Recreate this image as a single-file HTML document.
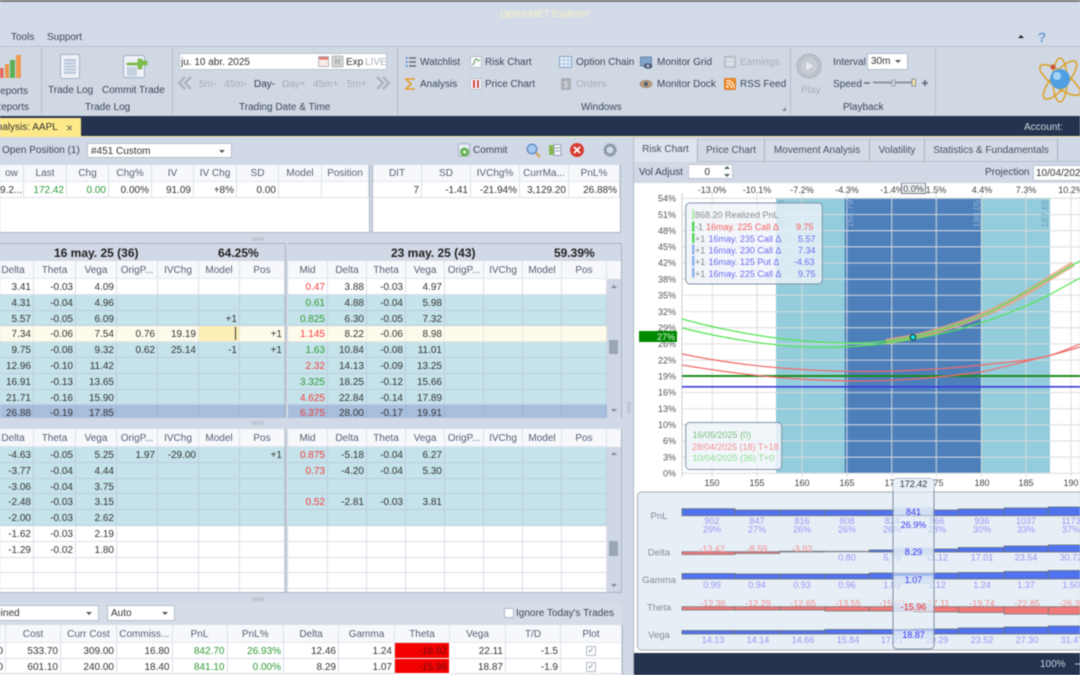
<!DOCTYPE html>
<html><head><meta charset="utf-8"><title>OptionNET Explorer</title>
<style>
html,body{margin:0;padding:0;background:#d2d9e6}
#p{position:absolute;left:0;top:0;width:1080px;height:675px;overflow:hidden;background:#d2d9e6;font:10px/12px "Liberation Sans",sans-serif;color:#3c4757;filter:blur(.4px)}
.a{position:absolute}
.t{position:absolute;white-space:nowrap;line-height:12px;margin-top:1.5px}
.g{color:#a6aeba}
.s{position:absolute;width:1px;background:#b4bfcd}
.cb{position:absolute;background:#fff;border:1px solid #b3bdcb;box-sizing:border-box;color:#333;line-height:16px;padding-left:3px;white-space:nowrap}
.cb:after{content:"";position:absolute;right:6px;top:6px;border:3px solid transparent;border-top:3px solid #555;border-bottom:0}
.grid{position:absolute;background:#fff;overflow:hidden}
.r{display:grid;grid-template-columns:var(--c);height:var(--h);box-sizing:border-box}
.r i{font-style:normal;text-align:right;padding-right:2px;line-height:calc(var(--h) + 2px);border-right:1px solid #dde1ea;border-bottom:1px solid #dde1ea;overflow:hidden;white-space:nowrap;color:#333;min-width:0}
.h i{background:#f6f8fb;text-align:center;color:#566072;padding:0;line-height:calc(var(--h) + 1px);border-right:1px solid #dce2ea;border-bottom:1px solid #e4e8ef}
.tl i{background:#c5e3ea;border-color:#bdcfdd}
.cr i{background:#fffbec;border-color:#ebe8de}
.bl i{background:#a7bedc;border-color:#9db2d0}
.r i.gr{color:#2f9a36}.r i.rd{color:#f23c3c}
.r i.y{background:#fdefb6;position:relative}
.r i.y:after{content:"";position:absolute;right:3px;top:1px;width:1px;height:13px;background:#333}
.r i.tr{background:#f40000;color:#701010;border-color:#fff}
.ck{display:inline-block;width:8px;height:8px;border:1px solid #b5bcc6;color:#778;font-size:8px;line-height:8px;text-align:center;background:#fbfcfd;vertical-align:middle}
.sb{position:absolute;background:#d0d7e4}
.th{position:absolute;background:#9aa5b6}
.b{position:absolute;white-space:nowrap;font-weight:bold;color:#222;font-size:12px;line-height:12px}
.tab{position:absolute;top:139px;height:22px;box-sizing:border-box;line-height:22px;text-align:center;border-right:1px solid #a9b2bf;border-top:1px solid #c2cad6;color:#465162;background:#d4dbe7}
.dots{position:absolute;width:11px;height:4px;background:repeating-linear-gradient(90deg,#aeb7c5 0 1px,transparent 1px 2px)}
svg text{font-family:"Liberation Sans",sans-serif}
</style></head><body><div id="p">

<!-- top strip & ribbon -->
<div class="a" style="left:0;top:0;width:1080px;height:2px;background:#7d7a78"></div>
<div class="a" style="left:0;top:2px;width:1080px;height:114px;background:#d4dbe8"></div>
<div class="t" style="left:500px;top:7px;color:#f6f1c4">OptionNET Explorer</div>
<div class="t" style="left:11px;top:30px;color:#3c4757">Tools</div>
<div class="t" style="left:47px;top:30px;color:#3c4757">Support</div>
<div class="a" style="left:0;top:46px;width:1080px;height:1px;background:#b8c2cf"></div>
<div class="a" style="left:0;top:47px;width:1080px;height:68px;background:#d0d8e4"></div>
<div class="s" style="left:41px;top:47px;height:68px"></div>
<div class="s" style="left:172px;top:47px;height:68px"></div>
<div class="s" style="left:397px;top:47px;height:68px"></div>
<div class="s" style="left:790px;top:47px;height:68px"></div>
<div class="s" style="left:935px;top:47px;height:68px"></div>

<svg class="a" style="left:0;top:0" width="1080" height="116" viewBox="0 0 1080 116">
 <!-- reports -->
 <rect x="0" y="68" width="3.5" height="10" fill="#e8665a"/><rect x="5" y="64" width="4" height="14" fill="#e89848"/><rect x="10" y="60" width="5" height="18" fill="#5eaf58"/><rect x="16" y="55" width="5" height="23" fill="#ee9a50"/>
 <!-- trade log -->
 <rect x="60.5" y="54.5" width="19" height="24" rx="1.5" fill="#eef2f8" stroke="#a5b1c6"/><rect x="64" y="59" width="12" height="15" fill="#bcc8dc"/><path d="M64 62h12M64 65h12M64 68h12M64 71h12" stroke="#e8edf4"/>
 <!-- commit trade -->
 <rect x="123.5" y="55.5" width="21" height="22" rx="1.5" fill="#eef2f8" stroke="#a5b1c6"/><rect x="127" y="63" width="10" height="1.6" fill="#7f9ac0"/><rect x="127" y="67" width="10" height="9" fill="#c6d0e0"/>
 <path d="M138 59v4h-11v2h11v4h4v-4h5v-4h-5v-2z" fill="#7fc04a" stroke="#5f9a30" stroke-width=".5"/>
 <!-- watchlist -->
 <path d="M409 58h7M409 62h7M409 66h7" stroke="#556" stroke-width="1.2"/><path d="M406 58h1.5M406 62h1.5M406 66h1.5" stroke="#4a86c8" stroke-width="2"/>
 <!-- analysis sigma -->
 <path d="M415 79h-9l5 5-5 5h9" fill="none" stroke="#e8a13c" stroke-width="1.8"/>
 <!-- risk chart -->
 <rect x="470.5" y="56.5" width="11" height="11" fill="#f6f8fb" stroke="#b7c0cc"/><path d="M472 65c3 0 2-6 4-6s1 3 4 1" fill="none" stroke="#5a9a50"/>
 <!-- price chart -->
 <rect x="470.5" y="78.5" width="11" height="11" fill="#f6f8fb" stroke="#b7c0cc"/><path d="M474 80v8" stroke="#d84040" stroke-width="2"/><path d="M478 80v8" stroke="#c05050" stroke-width="2"/>
 <!-- option chain -->
 <rect x="559.5" y="56.5" width="12" height="11" fill="#e4eefa" stroke="#88a4c8"/><path d="M560 60h11M560 64h11M564 57v10M568 57v10" stroke="#a4bcdc" stroke-width=".7"/>
 <!-- orders -->
 <rect x="561" y="78" width="10" height="12" rx="1" fill="#aab0b6"/><text x="566" y="87.5" font-size="8" text-anchor="middle" fill="#e4e8ec">$</text>
 <!-- monitor grid -->
 <rect x="640.5" y="57" width="11" height="9" fill="#7fa4cc" stroke="#6c88ac"/><ellipse cx="648" cy="66" rx="4.5" ry="2.8" fill="#50607a"/><circle cx="648" cy="66" r="1.2" fill="#dde"/>
 <!-- monitor dock -->
 <ellipse cx="646" cy="84" rx="6" ry="3.6" fill="#c0a080" stroke="#88705c" stroke-width=".6"/><circle cx="646" cy="84" r="2.2" fill="#50607a"/>
 <!-- earnings -->
 <rect x="724.5" y="56.5" width="11" height="11" fill="#c8ced6" stroke="#aeb5bd"/><rect x="726.5" y="59" width="7" height="1.5" fill="#e6e9ed"/><rect x="726.5" y="62" width="7" height="3.5" fill="#dde1e6"/>
 <!-- rss -->
 <rect x="724.5" y="78.5" width="11" height="11" rx="1" fill="#f09030" stroke="#d87a20"/><circle cx="727.5" cy="86.5" r="1.1" fill="#fff"/><path d="M726.5 83c3 0 5 2 5 5M726.5 80.5c4.5 0 7.5 3 7.5 7.5" fill="none" stroke="#fff" stroke-width="1"/>
 <!-- date controls -->
 <rect x="179.5" y="53.5" width="207" height="16" fill="#fff" stroke="#bcc5d2"/>
 <rect x="318.5" y="56.5" width="10" height="10" fill="#fbe8e4" stroke="#b0b8c8"/><rect x="319" y="57" width="9" height="2.6" fill="#e27a70"/>
 <rect x="332" y="56" width="11" height="11" rx="1" fill="#d2d4d4" stroke="#b8bcbc"/><path d="M336 59v5M339 59v5" stroke="#88908c"/>
 <!-- arrows -->
 <path d="M185 77l-6 6 6 6M191 77l-6 6 6 6" fill="none" stroke="#aeb5be" stroke-width="2.4"/>
 <path d="M377 77l6 6-6 6M383 77l6 6-6 6" fill="none" stroke="#aeb5be" stroke-width="2.4"/>
 <!-- launcher -->
 <path d="M786 107v4h-4z" fill="#7d8696"/>
 <!-- play -->
 <circle cx="809" cy="66" r="12" fill="#bcc2ca" stroke="#aeb4bc"/><circle cx="809" cy="66" r="8" fill="#c8cdd4"/><path d="M805.5 60.5l9 5.5-9 5.5z" fill="#e6e9ee" stroke="#a8aeb6" stroke-width=".5"/>
 <!-- slider -->
 <path d="M864 83h6" stroke="#5f6a7a" stroke-width="1.4"/><path d="M873 82.5h39" stroke="#8b95a3" stroke-width="2"/><rect x="892" y="80" width="3" height="6" fill="#d8dde4" stroke="#7f8896" stroke-width=".6"/><rect x="912" y="79" width="3.6" height="7" fill="#f6e8a8" stroke="#6a7280" stroke-width=".7"/><path d="M922 83h6M925 80v6" stroke="#5f6a7a" stroke-width="1.6"/>
 <!-- collapse / help -->
 <path d="M1018 38l3-3 3 3z" fill="#222"/>
 <text x="1042" y="42" font-size="14" font-weight="bold" fill="#6a9cd0" text-anchor="middle" font-family="Liberation Sans">?</text>
 <!-- atom -->
 <g fill="none" stroke="#dca42c" stroke-width="1.6"><ellipse cx="1060" cy="80" rx="24" ry="8" transform="rotate(35 1060 80)"/><ellipse cx="1060" cy="80" rx="24" ry="8" transform="rotate(-50 1060 80)"/><ellipse cx="1060" cy="80" rx="22" ry="7" transform="rotate(90 1060 80)"/></g>
 <circle cx="1060" cy="79" r="10" fill="#4f9fe2"/><circle cx="1057" cy="76" r="4" fill="#a2d4f6"/><circle cx="1053" cy="67" r="2.6" fill="#c85a3a"/>
</svg>

<div class="t" style="left:-7px;top:84px">Reports</div><div class="t" style="left:-6px;top:100px">Reports</div>
<div class="t" style="left:48px;top:83px">Trade Log</div>
<div class="t" style="left:102px;top:83px">Commit Trade</div>
<div class="t" style="left:85px;top:100px">Trade Log</div>
<div class="t" style="left:181px;top:55px;color:#333">ju. 10 abr. 2025</div>
<div class="t" style="left:346px;top:55px;color:#333">Exp</div>
<div class="t g" style="left:365px;top:55px">LIVE</div>
<div class="t g" style="left:199px;top:77px">5m-</div>
<div class="t g" style="left:224px;top:77px">45m-</div>
<div class="t" style="left:254px;top:77px;color:#2f3a4e">Day-</div>
<div class="t g" style="left:282px;top:77px">Day+</div>
<div class="t g" style="left:313px;top:77px">45m+</div>
<div class="t g" style="left:347px;top:77px">5m+</div>
<div class="t" style="left:239px;top:100px">Trading Date &amp; Time</div>
<div class="t" style="left:420px;top:55px">Watchlist</div>
<div class="t" style="left:420px;top:77px">Analysis</div>
<div class="t" style="left:485px;top:55px">Risk Chart</div>
<div class="t" style="left:485px;top:77px">Price Chart</div>
<div class="t" style="left:576px;top:55px">Option Chain</div>
<div class="t g" style="left:576px;top:77px">Orders</div>
<div class="t" style="left:657px;top:55px">Monitor Grid</div>
<div class="t" style="left:657px;top:77px">Monitor Dock</div>
<div class="t g" style="left:740px;top:55px">Earnings</div>
<div class="t" style="left:740px;top:77px">RSS Feed</div>
<div class="t" style="left:581px;top:100px">Windows</div>
<div class="t g" style="left:801px;top:83px">Play</div>
<div class="t" style="left:833px;top:55px">Interval</div>
<div class="cb" style="left:867px;top:53px;width:41px;height:17px">30m</div>
<div class="t" style="left:833px;top:77px">Speed</div>
<div class="t" style="left:843px;top:100px">Playback</div>

<!-- dark bar -->
<div class="a" style="left:0;top:116px;width:1080px;height:20px;background:#26334f"></div>
<div class="a" style="left:0;top:118px;width:81px;height:19px;background:#fde98a"></div>
<div class="t" style="left:-10px;top:120px;color:#333">Analysis: AAPL</div>
<div class="t" style="left:66px;top:120px;color:#555;font-size:12px">×</div>
<div class="t" style="left:1024px;top:120px;color:#cfd6e2">Account:</div>
<div class="a" style="left:81px;top:136px;width:999px;height:1px;background:#efe6a0"></div>

<!-- position bar -->
<div class="t" style="left:2px;top:143px">Open Position (1)</div>
<div class="cb" style="left:87px;top:143px;width:145px;height:15px;line-height:15px">#451 Custom</div>
<svg class="a" style="left:455px;top:142px" width="170" height="18" viewBox="455 142 170 18">
 <rect x="458.5" y="144" width="11" height="12" fill="#eef2f8" stroke="#9eacc4"/><circle cx="464.5" cy="152" r="4.5" fill="#62b050"/><path d="M462.5 152h4M464.5 150v4" stroke="#fff"/>
 <circle cx="532" cy="149" r="4.8" fill="#a4c8ec" stroke="#5c8cc4" stroke-width="1.3"/><path d="M536 153l4 4" stroke="#d8a050" stroke-width="2.2"/>
 <rect x="549" y="145" width="5" height="10" fill="#88b84c"/><rect x="554" y="144.5" width="7" height="11" fill="#f2f5f9" stroke="#93a2b8"/><path d="M555 148h5M555 151h5" stroke="#93a2b8"/>
 <circle cx="577" cy="150" r="7" fill="#d83c30"/><path d="M574 147l6 6M580 147l-6 6" stroke="#fff" stroke-width="1.8"/>
 <circle cx="610" cy="150" r="4.6" fill="none" stroke="#8a96a8" stroke-width="2.2"/><circle cx="610" cy="150" r="6.2" fill="none" stroke="#8a96a8" stroke-width="1.4" stroke-dasharray="1.8 1.4"/>
</svg>
<div class="t" style="left:473px;top:143px">Commit</div>

<!-- upper grids -->
<div class="grid" style="left:0;top:165px;width:369px;height:67px;--c:24px 43px 42px 43px 42px 43px 42px 43px 47px;--h:17px">
 <div class="r h"><i>ow</i><i>Last</i><i>Chg</i><i>Chg%</i><i>IV</i><i>IV Chg</i><i>SD</i><i>Model</i><i>Position</i></div>
 <div class="r" style="--h:16px"><i>9.2...</i><i class="gr">172.42</i><i class="gr">0.00</i><i>0.00%</i><i>91.09</i><i>+8%</i><i>0.00</i><i></i><i></i></div>
</div>
<div class="grid" style="left:373px;top:165px;width:247px;height:67px;--c:49px 49px 49px 49px 51px;--h:17px">
 <div class="r h"><i>DIT</i><i>SD</i><i>IVChg%</i><i>CurrMa...</i><i>PnL%</i></div>
 <div class="r" style="--h:16px"><i>7</i><i>-1.41</i><i>-21.94%</i><i>3,129.20</i><i>26.88%</i></div>
</div>
<div class="a" style="left:0;top:232px;width:370px;height:1px;background:#a9b4c4"></div>
<div class="a" style="left:369px;top:165px;width:1px;height:68px;background:#a9b4c4"></div>
<div class="a" style="left:372px;top:165px;width:1px;height:68px;background:#a9b4c4"></div>
<div class="a" style="left:373px;top:232px;width:248px;height:1px;background:#a9b4c4"></div>
<div class="a" style="left:620px;top:165px;width:1px;height:68px;background:#a9b4c4"></div>
<div class="dots" style="left:252px;top:237px"></div>

<!-- mid grids -->
<div class="a" style="left:0;top:243px;width:285px;height:1px;background:#a9b4c4"></div>
<div class="a" style="left:288px;top:243px;width:334px;height:1px;background:#a9b4c4"></div>
<div class="b" style="left:54px;top:247px">16 may. 25 (36)</div>
<div class="b" style="left:218px;top:247px">64.25%</div>
<div class="b" style="left:391px;top:247px">23 may. 25 (43)</div>
<div class="b" style="left:554px;top:247px">59.39%</div>

<div class="grid" style="left:-7px;top:261px;width:292px;height:157px;--c:41px 42px 41px 41px 41px 41px 45px;--h:15.8px">
 <div class="r h" style="--h:18px"><i>Delta</i><i>Theta</i><i>Vega</i><i>OrigP...</i><i>IVChg</i><i>Model</i><i>Pos</i></div>
 <div class="r"><i>3.41</i><i>-0.03</i><i>4.09</i><i></i><i></i><i></i><i></i></div>
 <div class="r tl"><i>4.31</i><i>-0.04</i><i>4.96</i><i></i><i></i><i></i><i></i></div>
 <div class="r tl"><i>5.57</i><i>-0.05</i><i>6.09</i><i></i><i></i><i>+1</i><i></i></div>
 <div class="r cr"><i>7.34</i><i>-0.06</i><i>7.54</i><i>0.76</i><i>19.19</i><i class="y"></i><i>+1</i></div>
 <div class="r tl"><i>9.75</i><i>-0.08</i><i>9.32</i><i>0.62</i><i>25.14</i><i>-1</i><i>+1</i></div>
 <div class="r tl"><i>12.96</i><i>-0.10</i><i>11.42</i><i></i><i></i><i></i><i></i></div>
 <div class="r tl"><i>16.91</i><i>-0.13</i><i>13.65</i><i></i><i></i><i></i><i></i></div>
 <div class="r tl"><i>21.71</i><i>-0.16</i><i>15.90</i><i></i><i></i><i></i><i></i></div>
 <div class="r bl"><i>26.88</i><i>-0.19</i><i>17.85</i><i></i><i></i><i></i><i></i></div>
</div>
<div class="a" style="left:285px;top:243px;width:1px;height:175px;background:#a9b4c4"></div>
<div class="grid" style="left:288px;top:261px;width:319px;height:157px;--c:40px 39px 39px 39px 39px 39px 39px 45px;--h:15.8px">
 <div class="r h" style="--h:18px"><i>Mid</i><i>Delta</i><i>Theta</i><i>Vega</i><i>OrigP...</i><i>IVChg</i><i>Model</i><i>Pos</i></div>
 <div class="r"><i class="rd">0.47</i><i>3.88</i><i>-0.03</i><i>4.97</i><i></i><i></i><i></i><i></i></div>
 <div class="r tl"><i class="gr">0.61</i><i>4.88</i><i>-0.04</i><i>5.98</i><i></i><i></i><i></i><i></i></div>
 <div class="r tl"><i class="gr">0.825</i><i>6.30</i><i>-0.05</i><i>7.32</i><i></i><i></i><i></i><i></i></div>
 <div class="r cr"><i class="rd">1.145</i><i>8.22</i><i>-0.06</i><i>8.98</i><i></i><i></i><i></i><i></i></div>
 <div class="r tl"><i class="gr">1.63</i><i>10.84</i><i>-0.08</i><i>11.01</i><i></i><i></i><i></i><i></i></div>
 <div class="r tl"><i class="rd">2.32</i><i>14.13</i><i>-0.09</i><i>13.25</i><i></i><i></i><i></i><i></i></div>
 <div class="r tl"><i class="gr">3.325</i><i>18.25</i><i>-0.12</i><i>15.66</i><i></i><i></i><i></i><i></i></div>
 <div class="r tl"><i class="rd">4.625</i><i>22.84</i><i>-0.14</i><i>17.89</i><i></i><i></i><i></i><i></i></div>
 <div class="r bl"><i class="rd">6.375</i><i>28.00</i><i>-0.17</i><i>19.91</i><i></i><i></i><i></i><i></i></div>
</div>
<div class="a" style="left:607px;top:261px;width:14px;height:18px;background:#f6f8fb"></div>
<div class="sb" style="left:607px;top:279px;width:14px;height:139px"></div>
<div class="th" style="left:609px;top:340px;width:9px;height:14px"></div>
<svg class="a" style="left:607px;top:279px" width="14" height="139"><path d="M4 9l3-3 3 3z" fill="#7d8899"/><path d="M4 130l3 3 3-3z" fill="#7d8899"/></svg>
<div class="a" style="left:621px;top:243px;width:1px;height:175px;background:#a9b4c4"></div>
<div class="dots" style="left:252px;top:421px"></div>

<!-- lower grids -->
<div class="grid" style="left:-7px;top:429px;width:292px;height:163px;--c:41px 42px 41px 41px 41px 41px 45px;--h:15.8px">
 <div class="r h" style="--h:18px"><i>Delta</i><i>Theta</i><i>Vega</i><i>OrigP...</i><i>IVChg</i><i>Model</i><i>Pos</i></div>
 <div class="r tl"><i>-4.63</i><i>-0.05</i><i>5.25</i><i>1.97</i><i>-29.00</i><i></i><i>+1</i></div>
 <div class="r tl"><i>-3.77</i><i>-0.04</i><i>4.44</i><i></i><i></i><i></i><i></i></div>
 <div class="r tl"><i>-3.06</i><i>-0.04</i><i>3.75</i><i></i><i></i><i></i><i></i></div>
 <div class="r tl"><i>-2.48</i><i>-0.03</i><i>3.15</i><i></i><i></i><i></i><i></i></div>
 <div class="r tl"><i>-2.00</i><i>-0.03</i><i>2.62</i><i></i><i></i><i></i><i></i></div>
 <div class="r"><i>-1.62</i><i>-0.03</i><i>2.19</i><i></i><i></i><i></i><i></i></div>
 <div class="r"><i>-1.29</i><i>-0.02</i><i>1.80</i><i></i><i></i><i></i><i></i></div>
 <div class="r"><i></i><i></i><i></i><i></i><i></i><i></i><i></i></div>
 <div class="r"><i></i><i></i><i></i><i></i><i></i><i></i><i></i></div>
 <div class="r"><i></i><i></i><i></i><i></i><i></i><i></i><i></i></div>
</div>
<div class="a" style="left:285px;top:429px;width:1px;height:163px;background:#a9b4c4"></div>
<div class="grid" style="left:288px;top:429px;width:319px;height:163px;--c:40px 39px 39px 39px 39px 39px 39px 45px;--h:15.8px">
 <div class="r h" style="--h:18px"><i>Mid</i><i>Delta</i><i>Theta</i><i>Vega</i><i>OrigP...</i><i>IVChg</i><i>Model</i><i>Pos</i></div>
 <div class="r tl"><i class="rd">0.875</i><i>-5.18</i><i>-0.04</i><i>6.27</i><i></i><i></i><i></i><i></i></div>
 <div class="r tl"><i class="rd">0.73</i><i>-4.20</i><i>-0.04</i><i>5.30</i><i></i><i></i><i></i><i></i></div>
 <div class="r tl"><i></i><i></i><i></i><i></i><i></i><i></i><i></i><i></i></div>
 <div class="r tl"><i class="rd">0.52</i><i>-2.81</i><i>-0.03</i><i>3.81</i><i></i><i></i><i></i><i></i></div>
 <div class="r tl"><i></i><i></i><i></i><i></i><i></i><i></i><i></i><i></i></div>
 <div class="r"><i></i><i></i><i></i><i></i><i></i><i></i><i></i><i></i></div>
 <div class="r"><i></i><i></i><i></i><i></i><i></i><i></i><i></i><i></i></div>
 <div class="r"><i></i><i></i><i></i><i></i><i></i><i></i><i></i><i></i></div>
 <div class="r"><i></i><i></i><i></i><i></i><i></i><i></i><i></i><i></i></div>
 <div class="r"><i></i><i></i><i></i><i></i><i></i><i></i><i></i><i></i></div>
</div>
<div class="a" style="left:607px;top:429px;width:14px;height:18px;background:#f6f8fb"></div>
<div class="sb" style="left:607px;top:447px;width:14px;height:145px"></div>
<div class="th" style="left:609px;top:541px;width:9px;height:15px"></div>
<svg class="a" style="left:607px;top:447px" width="14" height="145"><path d="M4 8l3-3 3 3z" fill="#7d8899"/><path d="M4 137l3 3 3-3z" fill="#7d8899"/></svg>
<div class="a" style="left:621px;top:429px;width:1px;height:163px;background:#a9b4c4"></div>
<div class="a" style="left:0;top:592px;width:622px;height:1px;background:#a9b4c4"></div>
<div class="dots" style="left:252px;top:597px"></div>

<!-- lower controls -->
<div class="a" style="left:0;top:603px;width:622px;height:22px;background:#d6dde8"></div>
<div class="cb" style="left:-30px;top:605px;width:129px;height:16px">Combined</div>
<div class="cb" style="left:107px;top:605px;width:68px;height:16px">Auto</div>
<div class="a" style="left:504px;top:608px;width:8px;height:8px;border:1px solid #aeb7c5;background:#fff"></div>
<div class="t" style="left:516px;top:606px">Ignore Today's Trades</div>

<div class="grid" style="left:-49px;top:625px;width:671px;height:50px;--c:55px 55px 56px 55.5px 55px 56.5px 55px 56px 55px 56px 55px 61px;--h:15.7px">
 <div class="r h" style="--h:18px"><i></i><i>Cost</i><i>Curr Cost</i><i>Commiss...</i><i>PnL</i><i>PnL%</i><i>Delta</i><i>Gamma</i><i>Theta</i><i>Vega</i><i>T/D</i><i>Plot</i></div>
 <div class="r"><i>0</i><i>533.70</i><i>309.00</i><i>16.80</i><i class="gr">842.70</i><i class="gr">26.93%</i><i>12.46</i><i>1.24</i><i class="tr">-18.92</i><i>22.11</i><i>-1.5</i><i style="text-align:center;padding:0"><span class="ck">✓</span></i></div>
 <div class="r"><i>0</i><i>601.10</i><i>240.00</i><i>18.40</i><i class="gr">841.10</i><i class="gr">0.00%</i><i>8.29</i><i>1.07</i><i class="tr">-15.96</i><i>18.87</i><i>-1.9</i><i style="text-align:center;padding:0"><span class="ck">✓</span></i></div>
</div>
<div class="a" style="left:622px;top:625px;width:1px;height:50px;background:#a9b4c4"></div>

<!-- splitter -->
<div class="a" style="left:633px;top:137px;width:1px;height:538px;background:#b2bbc9"></div>
<div class="a" style="left:627px;top:401px;width:4px;height:12px;background:repeating-linear-gradient(0deg,#aeb7c5 0 1px,transparent 1px 2px)"></div>

<!-- right tabs -->
<div class="tab" style="left:634px;width:64px;background:#dfe5ef;height:23px;border-top:0;">Risk Chart</div>
<div class="tab" style="left:698px;width:67px">Price Chart</div>
<div class="tab" style="left:765px;width:105px">Movement Analysis</div>
<div class="tab" style="left:870px;width:55px">Volatility</div>
<div class="tab" style="left:925px;width:133px">Statistics &amp; Fundamentals</div>
<div class="a" style="left:698px;top:161px;width:382px;height:1px;background:#b5bdca"></div>
<div class="t" style="left:639px;top:165px">Vol Adjust</div>
<div class="a" style="left:688px;top:164px;width:45px;height:15px;background:#fff;border:1px solid #bcc5d2;box-sizing:border-box;text-align:right;padding-right:22px;line-height:15px;color:#333">0</div>
<svg class="a" style="left:722px;top:165px" width="10" height="14"><path d="M2 4l3-3 3 3zM2 9l3 3 3-3z" fill="#566"/></svg>
<div class="t" style="left:985px;top:165px">Projection</div>
<div class="a" style="left:1033px;top:165px;width:60px;height:16px;background:#fff;border:1px solid #bcc5d2;box-sizing:border-box;line-height:15px;padding-left:2px;color:#333;white-space:nowrap">10/04/2025</div>

<!-- chart -->
<svg class="a" style="left:634px;top:183px" width="446" height="492" viewBox="634 183 446 492">
 <rect x="634" y="183" width="446" height="492" fill="#fff"/>
 <rect x="776" y="198" width="274" height="275" fill="#93ccdb"/>
 <rect x="844.7" y="198" width="136.3" height="275" fill="#4d7fbb"/>
 <g stroke="#dcdcdc" stroke-opacity=".75" stroke-width="1.3">
  <path d="M682 198.3H1080M682 214.5H1080M682 230.7H1080M682 246.8H1080M682 263H1080M682 279.2H1080M682 295.4H1080M682 311.6H1080M682 327.7H1080M682 343.9H1080M682 360.1H1080M682 376.3H1080M682 392.5H1080M682 408.6H1080M682 424.8H1080M682 441H1080M682 457.2H1080M682 473.3H1080"/>
  <path d="M712.3 193V477M757 193V477M802 193V477M847 193V477M891.7 193V477M936.3 193V477M981.5 193V477M1026 193V477M1071 193V477"/>
 </g>
 <path d="M682 193V477" stroke="#ccc"/>
 <g font-size="9" fill="#7aa6c4" >
  <text transform="translate(784 200) rotate(-90)" text-anchor="end">157.18</text>
  <text transform="translate(853 200) rotate(-90)" text-anchor="end" fill="#8fb2d8">164.79</text>
  <text transform="translate(980 200) rotate(-90)" text-anchor="end" fill="#8fb2d8">180.05</text>
  <text transform="translate(1048 200) rotate(-90)" text-anchor="end" fill="#6fa0c4">187.68</text>
 </g>
 <!-- lines -->
 <path d="M682 376H1080" stroke="#1c8a1c" stroke-width="2"/>
 <path d="M682 386.8H1080" stroke="#3c3ce0" stroke-width="1.6"/>
 <g fill="none" stroke-width="1.2">
  <path d="M682 354C730 364 790 371 860 371.5C910 371.5 960 368 1000 363C1020 361 1030 360 1044 357C1060 353 1070 350 1080 347" stroke="#f06c6c"/>
  <path d="M682 365C730 373 790 381 860 381C910 381 950 376 981 372C1005 367 1030 360 1044 357C1060 353 1070 348 1080 344" stroke="#f06c6c"/>
  <path d="M886 341.5C895 340 905 338.5 913 337C930 333.5 965 323 994 310C1015 300 1035 288 1050 278L1073 264" stroke="#e8a488" stroke-opacity=".8" stroke-width="5.5"/>
  <path d="M682 319C740 335 800 343 850 343C880 343 905 339 925 334C950 327 975 320 994 310C1015 298 1035 287 1050 278L1080 261" stroke="#52e552"/>
  <path d="M682 328C730 340 780 347 820 347.5C860 347.5 890 343 913 339C950 333 985 323 1016 310C1035 303 1060 289 1080 278" stroke="#52e552"/>
 </g>
 <circle cx="913" cy="337.3" r="2.8" fill="#12e4e4" stroke="#103030"/>
 <!-- y labels -->
 <g font-size="9" fill="#555" text-anchor="end">
  <text x="676" y="201.5">54%</text><text x="676" y="218">51%</text><text x="676" y="234">48%</text><text x="676" y="250">45%</text><text x="676" y="266">42%</text><text x="676" y="282.5">38%</text><text x="676" y="298.5">35%</text><text x="676" y="315">32%</text><text x="676" y="331">29%</text><text x="676" y="347">26%</text><text x="676" y="363.5">22%</text><text x="676" y="379.5">19%</text><text x="676" y="395.5">16%</text><text x="676" y="412">13%</text><text x="676" y="428">10%</text><text x="676" y="444">6%</text><text x="676" y="460.5">3%</text><text x="676" y="476.5">0%</text>
 </g>
 <rect x="639" y="331" width="38" height="11" fill="#008a00"/>
 <text x="675" y="340" font-size="9" fill="#d8efd8" text-anchor="end">27%</text>
 <!-- top labels -->
 <g font-size="9" fill="#444" text-anchor="middle">
  <text x="712" y="193">-13.0%</text><text x="757" y="193">-10.1%</text><text x="802" y="193">-7.2%</text><text x="847" y="193">-4.3%</text><text x="892" y="193">-1.4%</text><text x="936" y="193">1.5%</text><text x="982" y="193">4.4%</text><text x="1026" y="193">7.3%</text><text x="1071" y="193">10.2%</text>
 </g>
 <rect x="901.5" y="183" width="24" height="10.5" fill="#eef2f6" stroke="#778"/>
 <text x="913.5" y="192" font-size="9" fill="#444" text-anchor="middle">0.0%</text>
 <!-- legend top -->
 <rect x="685.7" y="203" width="136.6" height="81" rx="4" fill="#eef4fa" fill-opacity=".78" stroke="#7f93a6"/>
 <rect x="692" y="209.5" width="2.5" height="10" fill="#b4ecb4"/><rect x="692" y="221.5" width="2.5" height="10" fill="#58d858"/><rect x="692" y="233" width="2.5" height="10" fill="#58d858"/><rect x="692" y="244.5" width="2.5" height="10" fill="#8fb2ee"/><rect x="692" y="256" width="2.5" height="10" fill="#8fb2ee"/><rect x="692" y="267.5" width="2.5" height="10" fill="#8fb2ee"/>
 <g font-size="9">
  <text x="695" y="218" fill="#8a8a8a">868.20 Realized PnL</text>
  <text x="695" y="230" fill="#8a8a8a">-1</text><text x="706" y="230" fill="#f56060">16may. 225 Call Δ</text><text x="796" y="230" fill="#f56060">9.75</text>
  <text x="695" y="242" fill="#8a8a8a">+1</text><text x="708.5" y="242" fill="#6c6cf0">16may. 235 Call Δ</text><text x="798" y="242" fill="#6c6cf0">5.57</text>
  <text x="695" y="253.5" fill="#8a8a8a">+1</text><text x="708.5" y="253.5" fill="#6c6cf0">16may. 230 Call Δ</text><text x="798" y="253.5" fill="#6c6cf0">7.34</text>
  <text x="695" y="265" fill="#8a8a8a">+1</text><text x="708.5" y="265" fill="#6c6cf0">16may. 125 Put Δ</text><text x="794" y="265" fill="#6c6cf0">-4.63</text>
  <text x="695" y="277" fill="#8a8a8a">+1</text><text x="708.5" y="277" fill="#6c6cf0">16may. 225 Call Δ</text><text x="798" y="277" fill="#6c6cf0">9.75</text>
 </g>
 <!-- legend bottom -->
 <rect x="685.7" y="422.5" width="96" height="47" rx="4" fill="#eef4fa" fill-opacity=".85" stroke="#7f93a6"/>
 <g font-size="9">
  <text x="692.5" y="438" fill="#7cc07c">16/05/2025 (0)</text>
  <text x="692" y="450" fill="#f59090">28/04/2025 (18) T+18</text>
  <text x="692.5" y="461" fill="#8fe08f">10/04/2025 (36) T+0</text>
 </g>
 <!-- x labels -->
 <g font-size="9" fill="#444" text-anchor="middle">
  <text x="712" y="486">150</text><text x="757" y="486">155</text><text x="802" y="486">160</text><text x="847" y="486">165</text><text x="892" y="486">170</text><text x="936" y="486">175</text><text x="982" y="486">180</text><text x="1026" y="486">185</text><text x="1071" y="486">190</text>
 </g>

 <!-- lower panel -->
 <rect x="637.5" y="492" width="460" height="158" rx="4" fill="#e6eef6" stroke="#a5adb8"/>
 <g font-size="9.5" fill="#858b95" text-anchor="middle">
  <text x="659" y="519">PnL</text><text x="659" y="555.5">Delta</text><text x="659" y="583">Gamma</text><text x="659" y="610.5">Theta</text><text x="659" y="638">Vega</text>
 </g>
 <g fill="#4f72ef" stroke="#6a6f7a" stroke-width=".8">
  <rect x="682" y="508.7" width="53" height="7"/><rect x="735" y="510" width="44.7" height="5.7"/><rect x="779.7" y="510" width="45" height="5.7"/><rect x="824.7" y="510" width="44.6" height="5.7"/><rect x="869.3" y="510" width="44.7" height="5.7"/><rect x="914" y="510" width="44.3" height="5.7"/><rect x="958.3" y="509" width="45.7" height="6.7"/><rect x="1004" y="508" width="44.3" height="7.7"/><rect x="1048.3" y="507" width="40" height="8.7"/>
  <rect x="869.3" y="550" width="44.7" height="2"/><rect x="914" y="549" width="44.3" height="3"/><rect x="958.3" y="547.5" width="45.7" height="4.5"/><rect x="1004" y="546" width="44.3" height="6"/><rect x="1048.3" y="545" width="40" height="7"/>
  <rect x="682" y="573.5" width="53" height="5.5"/><rect x="735" y="574" width="44.7" height="5"/><rect x="779.7" y="574" width="45" height="5"/><rect x="824.7" y="574" width="44.6" height="5"/><rect x="869.3" y="573" width="44.7" height="6"/><rect x="914" y="573" width="44.3" height="6"/><rect x="958.3" y="572.5" width="45.7" height="6.5"/><rect x="1004" y="571.5" width="44.3" height="7.5"/><rect x="1048.3" y="570.5" width="40" height="8.5"/>
  <rect x="682" y="630.5" width="53" height="3.5"/><rect x="735" y="630.5" width="44.7" height="3.5"/><rect x="779.7" y="630.5" width="45" height="3.5"/><rect x="824.7" y="629.5" width="44.6" height="4.5"/><rect x="869.3" y="629.5" width="44.7" height="4.5"/><rect x="914" y="629" width="44.3" height="5"/><rect x="958.3" y="628" width="45.7" height="6"/><rect x="1004" y="627" width="44.3" height="7"/><rect x="1048.3" y="626" width="40" height="8"/>
 </g>
 <g fill="#f07878" stroke="#7a7a80" stroke-width=".8">
  <rect x="682" y="551.7" width="53" height="2.8"/><rect x="735" y="551.7" width="44.7" height="1.8"/><rect x="779.7" y="551.2" width="45" height=".8" fill="#666"/><rect x="824.7" y="551.3" width="44.6" height=".4" fill="#999"/>
  <rect x="682" y="606.7" width="53" height="3.3"/><rect x="735" y="606.7" width="44.7" height="3.3"/><rect x="779.7" y="606.7" width="45" height="3.3"/><rect x="824.7" y="606.7" width="44.6" height="4.3"/><rect x="869.3" y="606.7" width="44.7" height="4.3"/><rect x="914" y="606.7" width="44.3" height="5.3"/><rect x="958.3" y="606.7" width="45.7" height="5.8"/><rect x="1004" y="606.7" width="44.3" height="7.3"/><rect x="1048.3" y="606.7" width="40" height="7.8"/>
 </g>
 <g font-size="9" fill="#9898f4" text-anchor="middle">
  <text x="712" y="524">902</text><text x="712" y="532.5">29%</text><text x="757" y="524">847</text><text x="757" y="532.5">27%</text><text x="802" y="524">816</text><text x="802" y="532.5">26%</text><text x="847" y="524">808</text><text x="847" y="532.5">26%</text><text x="892" y="524">824</text><text x="892" y="532.5">26%</text><text x="937" y="524">866</text><text x="937" y="532.5">28%</text><text x="982" y="524">936</text><text x="982" y="532.5">30%</text><text x="1026" y="524">1037</text><text x="1026" y="532.5">33%</text><text x="1071" y="524">1173</text><text x="1071" y="532.5">37%</text>
  <text x="847" y="560.5">0.80</text><text x="892" y="560.5">5.75</text><text x="937" y="560.5">11.12</text><text x="982" y="560.5">17.01</text><text x="1026" y="560.5">23.54</text><text x="1071" y="560.5">30.72</text>
  <text x="712" y="588">0.99</text><text x="757" y="588">0.94</text><text x="802" y="588">0.93</text><text x="847" y="588">0.96</text><text x="892" y="588">1.03</text><text x="937" y="588">1.12</text><text x="982" y="588">1.24</text><text x="1026" y="588">1.37</text><text x="1071" y="588">1.50</text>
  <text x="713" y="643">14.13</text><text x="758" y="643">14.14</text><text x="803" y="643">14.66</text><text x="848" y="643">15.84</text><text x="892" y="643">17.71</text><text x="937" y="643">20.29</text><text x="982" y="643">23.52</text><text x="1027" y="643">27.30</text><text x="1072" y="643">31.47</text>
 </g>
 <g font-size="9" fill="#f09090" text-anchor="middle">
  <text x="712" y="552">-13.42</text><text x="757" y="552">-8.59</text><text x="802" y="552">-3.92</text>
  <text x="713" y="606.5">-12.36</text><text x="758" y="606.5">-12.29</text><text x="803" y="606.5">-12.65</text><text x="848" y="606.5">-13.55</text><text x="892" y="606.5">-15.03</text><text x="937" y="606.5">-17.11</text><text x="982" y="606.5">-19.74</text><text x="1027" y="606.5">-22.85</text><text x="1072" y="606.5">-26.31</text>
 </g>
 <!-- price overlay -->
 <rect x="893" y="478.5" width="41" height="170.5" rx="4" fill="#e6eef6" fill-opacity=".55" stroke="#7f8fa2"/>
 <path d="M893 490V482.5a4 4 0 0 1 4-4h33a4 4 0 0 1 4 4V490z" fill="#e8f0f8"/>
 <text x="913.5" y="487" font-size="9" fill="#333" text-anchor="middle">172.42</text>
 <g fill="#d6e2f4" fill-opacity=".9"><rect x="894" y="507" width="39" height="8"/><rect x="894" y="547" width="39" height="9"/><rect x="894" y="576" width="39" height="8"/><rect x="894" y="603" width="39" height="8"/><rect x="894" y="631" width="39" height="8"/></g>
 <g font-size="9" fill="#3838f0" text-anchor="middle">
  <text x="913.5" y="515">841</text><text x="913.5" y="528">26.9%</text><text x="913.5" y="555">8.29</text><text x="913.5" y="583">1.07</text><text x="913.5" y="610" fill="#f02020">-15.96</text><text x="913.5" y="638">18.87</text>
 </g>
 <!-- bottom bar -->
 <rect x="634" y="653" width="446" height="22" fill="#26334f"/>
 <text x="1040" y="667" font-size="10" fill="#c8d0dc">100%</text>
 <path d="M1075 664h5" stroke="#c8d0dc"/>
</svg>

</div></body></html>
